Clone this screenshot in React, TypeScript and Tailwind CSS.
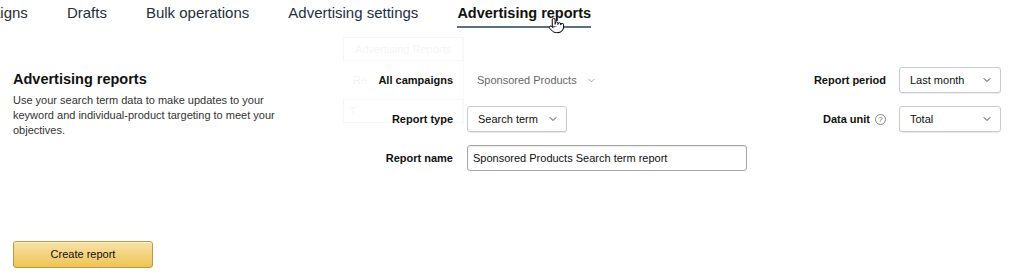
import { ChevronDown, Pointer } from 'lucide-react'

const tabs = ['Campaigns', 'Drafts', 'Bulk operations', 'Advertising settings', 'Advertising reports']

function Select({ value, width }: { value: string; width: string }) {
  return (
    <div
      className={`${width} h-[26px] flex items-center justify-between pl-[10px] pr-[7px] bg-white border border-[#c8cbcf] rounded-[3px] shadow-[0_1px_1px_rgba(0,0,0,0.08)] text-[11px] text-[#111]`}
    >
      <span>{value}</span>
      <ChevronDown size={12} strokeWidth={2} className="text-[#444]" />
    </div>
  )
}

export default function App() {
  return (
    <div className="relative w-[1024px] h-[272px] overflow-hidden bg-white text-[#111] font-['Liberation_Sans',Arial,sans-serif]">
      {/* tab bar */}
      <div className="relative flex gap-[39px] h-[28px] -ml-[48px] text-[15px] text-[#232f3e]">
        {tabs.map((t) => (
          <div
            key={t}
            className={
              t === 'Advertising reports'
                ? 'h-[28px] pt-[3px] leading-[20px] font-bold text-[14.5px] text-[#111] border-b-2 border-[#5d7081]'
                : 'h-[28px] pt-[3px] leading-[20px]'
            }
          >
            {t}
          </div>
        ))}
      </div>
      <Pointer
        size={17}
        strokeWidth={1.4}
        className="absolute left-[548px] top-[17px] text-black fill-white"
      />

      {/* faded dropdown left over from the tab menu */}
      <div className="absolute left-[343px] top-[37px] w-[121px] h-[88px] border-r border-black/40 opacity-[0.05] text-[11px] text-[#333]">
        <div className="h-[24px] border border-black/60 flex items-center justify-center">Advertising Reports</div>
        <div className="h-[38px] flex items-center pl-[10px]">Re</div>
        <div className="h-[24px] border border-black/60 flex items-center pl-[6px]">T</div>
      </div>

      {/* content */}
      <div className="flex mt-[39px] pl-[13px] pr-[23px]">
        <div className="w-[327px] pt-[3px]">
          <h2 className="text-[14.5px] font-bold leading-[18px] text-[#111]">Advertising reports</h2>
          <p className="mt-[5px] text-[11px] leading-[15px] text-[#333] w-[270px]">
            Use your search term data to make updates to your keyword and individual-product targeting to meet your
            objectives.
          </p>
        </div>

        <div className="grid grid-cols-[113px_auto] gap-x-[14px] gap-y-[13px] items-center">
          <div className="text-right text-[11px] font-bold leading-[26px]">All campaigns</div>
          <div className="flex items-center gap-[9px] pl-[10px] text-[11px] text-[#666] h-[26px]">
            Sponsored Products
            <ChevronDown size={11} strokeWidth={1.5} className="text-[#888]" />
          </div>
          <div className="text-right text-[11px] font-bold leading-[26px]">Report type</div>
          <Select value="Search term" width="w-[100px]" />
          <div className="text-right text-[11px] font-bold leading-[26px]">Report name</div>
          <div className="w-[280px] h-[26px] flex items-center pl-[5px] border border-[#a6a6a6] rounded-[3px] shadow-[inset_0_1px_1px_rgba(0,0,0,0.08)] text-[11px]">
            Sponsored Products Search term report
          </div>
        </div>

        <div className="ml-auto grid grid-cols-[auto_102px] gap-x-[13px] gap-y-[13px] items-center h-fit">
          <div className="text-right text-[11px] font-bold leading-[26px]">Report period</div>
          <Select value="Last month" width="w-[102px]" />
          <div className="flex items-center justify-end gap-[5px] text-[11px] font-bold leading-[26px]">
            Data unit
            <span className="w-[11px] h-[11px] rounded-full border border-[#888] text-[8px] leading-[9px] text-center font-normal text-[#777]">
              ?
            </span>
          </div>
          <Select value="Total" width="w-[102px]" />
        </div>
      </div>

      <button className="ml-[13px] mt-[70px] w-[140px] h-[27px] rounded-[3px] border border-[#b99a46] bg-gradient-to-b from-[#f7e1a6] to-[#f0c350] text-[11px] text-[#111] shadow-[inset_0_1px_0_rgba(255,255,255,0.6)]">
        Create report
      </button>
    </div>
  )
}
